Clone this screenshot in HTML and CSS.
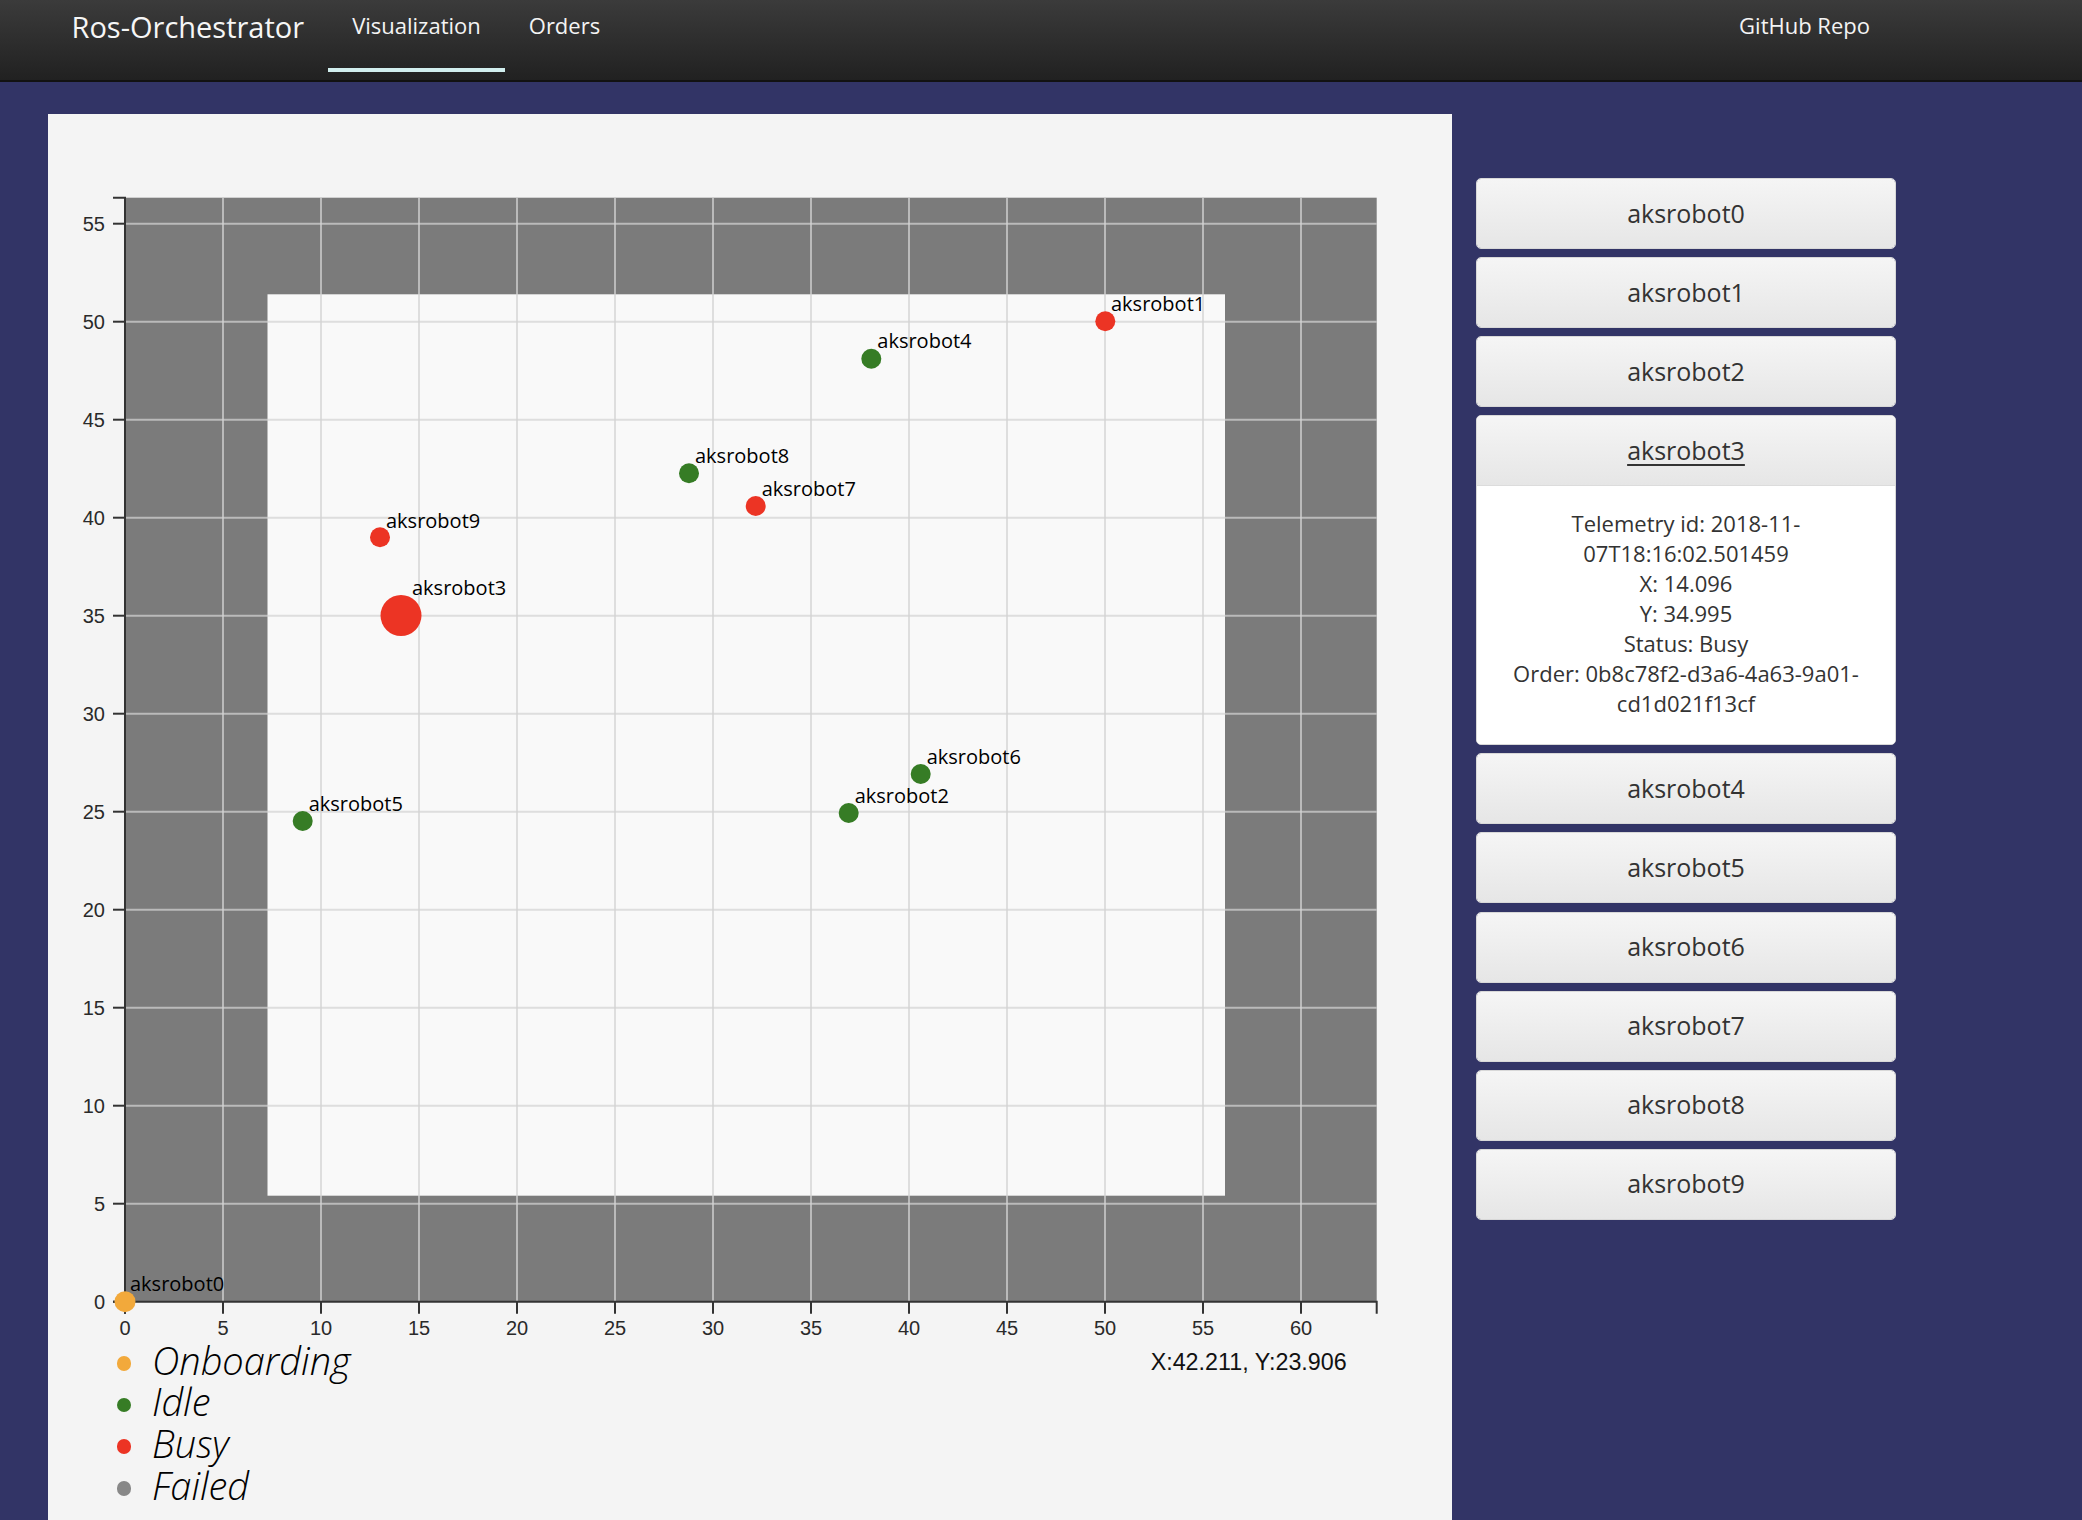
FILE: index.html
```html
<!DOCTYPE html>
<html lang="en">
<head>
<meta charset="utf-8">
<title>Ros-Orchestrator</title>
<link rel="stylesheet" href="styles.css">
</head>
<body>
<nav class="navbar">
  <span class="brand">Ros-Orchestrator</span>
  <a class="nav-link active">Visualization</a>
  <a class="nav-link">Orders</a>
  <a class="nav-link github">GitHub Repo</a>
</nav>
<main class="main">
  <section class="panel">
    <svg class="chart" width="1404" height="1225.5" viewBox="0 0 1404 1225.5">
      <rect class="plot-bg" x="77" y="83.7" width="1251.7" height="1104"/>
      <rect class="map" x="219.5" y="180.3" width="957.5" height="901.4"/>
      <g class="grid">
        <line x1="175" y1="83.7" x2="175" y2="1187.7"/>
        <line x1="273" y1="83.7" x2="273" y2="1187.7"/>
        <line x1="371" y1="83.7" x2="371" y2="1187.7"/>
        <line x1="469" y1="83.7" x2="469" y2="1187.7"/>
        <line x1="567" y1="83.7" x2="567" y2="1187.7"/>
        <line x1="665" y1="83.7" x2="665" y2="1187.7"/>
        <line x1="763" y1="83.7" x2="763" y2="1187.7"/>
        <line x1="861" y1="83.7" x2="861" y2="1187.7"/>
        <line x1="959" y1="83.7" x2="959" y2="1187.7"/>
        <line x1="1057" y1="83.7" x2="1057" y2="1187.7"/>
        <line x1="1155" y1="83.7" x2="1155" y2="1187.7"/>
        <line x1="1253" y1="83.7" x2="1253" y2="1187.7"/>
        <line x1="77" y1="1089.7" x2="1328.7" y2="1089.7"/>
        <line x1="77" y1="991.7" x2="1328.7" y2="991.7"/>
        <line x1="77" y1="893.7" x2="1328.7" y2="893.7"/>
        <line x1="77" y1="795.7" x2="1328.7" y2="795.7"/>
        <line x1="77" y1="697.7" x2="1328.7" y2="697.7"/>
        <line x1="77" y1="599.7" x2="1328.7" y2="599.7"/>
        <line x1="77" y1="501.7" x2="1328.7" y2="501.7"/>
        <line x1="77" y1="403.7" x2="1328.7" y2="403.7"/>
        <line x1="77" y1="305.7" x2="1328.7" y2="305.7"/>
        <line x1="77" y1="207.7" x2="1328.7" y2="207.7"/>
        <line x1="77" y1="109.7" x2="1328.7" y2="109.7"/>
      </g>
      <g class="axis">
        <path class="domain" d="M65,83.7H77V1187.7H65"/>
        <path class="domain" d="M77,1199.7V1187.7H1328.7V1199.7"/>
        <g class="ticks">
          <line x1="65" y1="1187.7" x2="77" y2="1187.7"/>
          <line x1="65" y1="1089.7" x2="77" y2="1089.7"/>
          <line x1="65" y1="991.7" x2="77" y2="991.7"/>
          <line x1="65" y1="893.7" x2="77" y2="893.7"/>
          <line x1="65" y1="795.7" x2="77" y2="795.7"/>
          <line x1="65" y1="697.7" x2="77" y2="697.7"/>
          <line x1="65" y1="599.7" x2="77" y2="599.7"/>
          <line x1="65" y1="501.7" x2="77" y2="501.7"/>
          <line x1="65" y1="403.7" x2="77" y2="403.7"/>
          <line x1="65" y1="305.7" x2="77" y2="305.7"/>
          <line x1="65" y1="207.7" x2="77" y2="207.7"/>
          <line x1="65" y1="109.7" x2="77" y2="109.7"/>
          <line x1="77" y1="1187.7" x2="77" y2="1199.7"/>
          <line x1="175" y1="1187.7" x2="175" y2="1199.7"/>
          <line x1="273" y1="1187.7" x2="273" y2="1199.7"/>
          <line x1="371" y1="1187.7" x2="371" y2="1199.7"/>
          <line x1="469" y1="1187.7" x2="469" y2="1199.7"/>
          <line x1="567" y1="1187.7" x2="567" y2="1199.7"/>
          <line x1="665" y1="1187.7" x2="665" y2="1199.7"/>
          <line x1="763" y1="1187.7" x2="763" y2="1199.7"/>
          <line x1="861" y1="1187.7" x2="861" y2="1199.7"/>
          <line x1="959" y1="1187.7" x2="959" y2="1199.7"/>
          <line x1="1057" y1="1187.7" x2="1057" y2="1199.7"/>
          <line x1="1155" y1="1187.7" x2="1155" y2="1199.7"/>
          <line x1="1253" y1="1187.7" x2="1253" y2="1199.7"/>
        </g>
        <g class="ylabels">
          <text x="57" y="1187.7" dy="0.34em">0</text>
          <text x="57" y="1089.7" dy="0.34em">5</text>
          <text x="57" y="991.7" dy="0.34em">10</text>
          <text x="57" y="893.7" dy="0.34em">15</text>
          <text x="57" y="795.7" dy="0.34em">20</text>
          <text x="57" y="697.7" dy="0.34em">25</text>
          <text x="57" y="599.7" dy="0.34em">30</text>
          <text x="57" y="501.7" dy="0.34em">35</text>
          <text x="57" y="403.7" dy="0.34em">40</text>
          <text x="57" y="305.7" dy="0.34em">45</text>
          <text x="57" y="207.7" dy="0.34em">50</text>
          <text x="57" y="109.7" dy="0.34em">55</text>
        </g>
        <g class="xlabels">
          <text x="77" y="1221">0</text>
          <text x="175" y="1221">5</text>
          <text x="273" y="1221">10</text>
          <text x="371" y="1221">15</text>
          <text x="469" y="1221">20</text>
          <text x="567" y="1221">25</text>
          <text x="665" y="1221">30</text>
          <text x="763" y="1221">35</text>
          <text x="861" y="1221">40</text>
          <text x="959" y="1221">45</text>
          <text x="1057" y="1221">50</text>
          <text x="1155" y="1221">55</text>
          <text x="1253" y="1221">60</text>
        </g>
      </g>
      <g class="bots">
        <circle class="onboarding" cx="77" cy="1187.7" r="10.5"/>
        <text x="82" y="1176.7">aksrobot0</text>
        <circle class="busy" cx="1057.3" cy="207.3" r="10"/>
        <text x="1063" y="196.7">aksrobot1</text>
        <circle class="idle" cx="800.7" cy="699" r="10"/>
        <text x="806.7" y="688.5">aksrobot2</text>
        <circle class="idle" cx="823.3" cy="244.7" r="10"/>
        <text x="829.3" y="234">aksrobot4</text>
        <circle class="idle" cx="254.7" cy="707" r="10"/>
        <text x="260.7" y="696.5">aksrobot5</text>
        <circle class="idle" cx="872.7" cy="660" r="10"/>
        <text x="878.7" y="649.5">aksrobot6</text>
        <circle class="busy" cx="707.7" cy="392" r="10"/>
        <text x="713.7" y="381.5">aksrobot7</text>
        <circle class="idle" cx="641" cy="359.3" r="10"/>
        <text x="647" y="348.8">aksrobot8</text>
        <circle class="busy" cx="332" cy="423.3" r="10"/>
        <text x="338" y="413.8">aksrobot9</text>
        <circle class="busy" cx="353" cy="501.5" r="20.5"/>
        <text x="364" y="480.5">aksrobot3</text>
      </g>
    </svg>
    <div class="chart-footer">
      <ul class="legend">
        <li class="legend-item"><span class="dot onboarding"></span>Onboarding</li>
        <li class="legend-item"><span class="dot idle"></span>Idle</li>
        <li class="legend-item"><span class="dot busy"></span>Busy</li>
        <li class="legend-item"><span class="dot failed"></span>Failed</li>
      </ul>
      <div class="coords">X:42.211, Y:23.906</div>
    </div>
  </section>
  <aside class="robot-list">
    <div class="card"><div class="card-head">aksrobot0</div></div>
    <div class="card"><div class="card-head">aksrobot1</div></div>
    <div class="card"><div class="card-head">aksrobot2</div></div>
    <div class="card open">
      <div class="card-head"><span class="card-link">aksrobot3</span></div>
      <div class="card-body">
        <div>Telemetry id: 2018-11-07T18:16:02.501459</div>
        <div>X: 14.096</div>
        <div>Y: 34.995</div>
        <div>Status: Busy</div>
        <div>Order: 0b8c78f2-d3a6-4a63-9a01-cd1d021f13cf</div>
      </div>
    </div>
    <div class="card"><div class="card-head">aksrobot4</div></div>
    <div class="card"><div class="card-head">aksrobot5</div></div>
    <div class="card"><div class="card-head">aksrobot6</div></div>
    <div class="card"><div class="card-head">aksrobot7</div></div>
    <div class="card"><div class="card-head">aksrobot8</div></div>
    <div class="card"><div class="card-head">aksrobot9</div></div>
  </aside>
</main>
</body>
</html>
```
FILE: styles.css
```css
html, body {
  margin: 0;
  height: 100%;
  overflow: hidden;
}
body {
  background: #323466;
  font-family: "Open Sans", "Noto Sans", sans-serif;
}
.navbar {
  height: 80px;
  border-bottom: 2px solid #121212;
  background: linear-gradient(#3b3b3b, #212121);
  display: flex;
  align-items: flex-start;
  padding-left: 71.5px;
}
.brand {
  font-size: 29px;
  line-height: 40px;
  margin-top: 7px;
  margin-right: 24px;
  color: #f6f6f6;
}
.nav-link {
  font-size: 22px;
  line-height: 30px;
  padding: 10px 24px 28px;
  color: #f4f4f4;
  text-decoration: none;
  cursor: pointer;
}
.nav-link.active {
  border-bottom: 4px solid #d1eeee;
}
.nav-link.github {
  margin-left: auto;
  margin-right: 188px;
}
.main {
  display: flex;
  align-items: flex-start;
  gap: 24px;
  padding: 32px 0 0 48px;
}
.panel {
  flex: none;
  width: 1404px;
  height: 1406px;
  background: #f4f4f4;
}
.chart {
  display: block;
}
.plot-bg { fill: #7b7b7b; }
.map { fill: #f9f9f9; }
.grid line {
  stroke: #d3d3d3;
  stroke-opacity: 0.72;
  stroke-width: 2;
}
.axis .domain,
.axis .ticks line {
  fill: none;
  stroke: #333;
  stroke-width: 2;
}
.axis text {
  font-family: "Liberation Sans", Arial, sans-serif;
  font-size: 20px;
  fill: #2a2a2a;
}
.ylabels text { text-anchor: end; }
.xlabels text { text-anchor: middle; }
.bots text {
  font-family: "Open Sans", sans-serif;
  font-size: 20px;
  fill: #000;
}
circle.onboarding { fill: #f2a93b; }
circle.idle { fill: #367c25; }
circle.busy { fill: #ec3424; }
.chart-footer {
  display: flex;
  justify-content: space-between;
  align-items: flex-start;
  padding-right: 105.3px;
}
.legend {
  list-style: none;
  margin: 0;
  padding: 0;
}
.legend-item {
  display: flex;
  align-items: center;
  height: 41.7px;
  line-height: 41.7px;
  font-style: italic;
  font-weight: 300;
  font-size: 38px;
  color: #000;
}
.dot {
  flex: none;
  width: 14.6px;
  height: 14.6px;
  border-radius: 50%;
  margin: 5.8px 20.7px 0 68.7px;
}
.dot.onboarding { background: #f2a93b; }
.dot.idle { background: #367c25; }
.dot.busy { background: #ec3424; }
.dot.failed { background: #888888; }
.coords {
  margin-top: 2.8px;
  font-family: "Liberation Sans", Arial, sans-serif;
  font-size: 23.3px;
  line-height: 41.7px;
  color: #111;
}
.robot-list {
  flex: none;
  width: 420px;
  padding-top: 64px;
  display: flex;
  flex-direction: column;
  gap: 8.1px;
}
.card {
  border: 1px solid #d8d8d8;
  border-radius: 5px;
  overflow: hidden;
  background: #fff;
}
.card-head {
  height: 69px;
  box-sizing: border-box;
  padding-bottom: 2px;
  display: flex;
  align-items: center;
  justify-content: center;
  background: linear-gradient(#f5f5f5, #e6e6e6);
  font-size: 25px;
  color: #333;
}
.card.open .card-head {
  border-bottom: 1px solid #dcdcdc;
  height: 70px;
}
.card-link {
  text-decoration: underline;
  text-underline-offset: 4px;
}
.card-body {
  padding: 22px 20px 26px;
  font-size: 22px;
  line-height: 30px;
  color: #333;
  text-align: center;
  background: #fff;
}
```
